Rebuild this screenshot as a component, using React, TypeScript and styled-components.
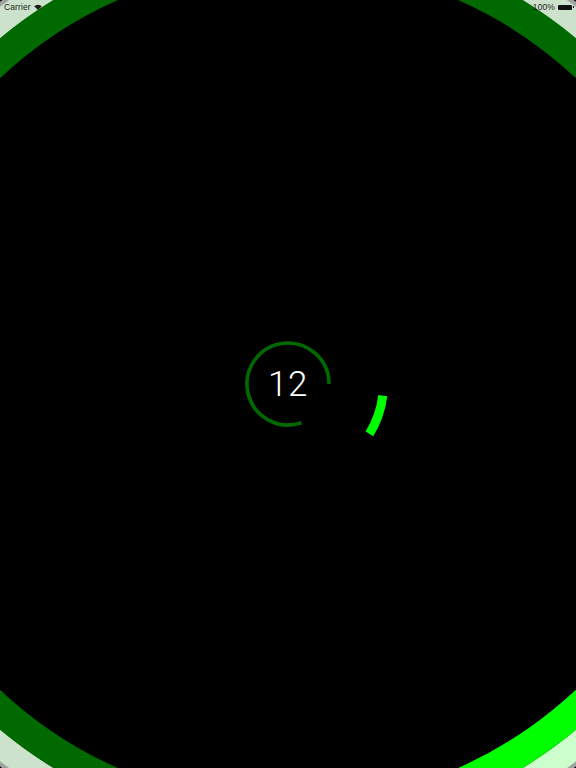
import React from "react";
import styled, { createGlobalStyle } from "styled-components";

const GlobalStyle = createGlobalStyle`
  html, body {
    margin: 0;
    padding: 0;
    background: #000;
    overflow: hidden;
  }
`;

const DARK = "#006a00";
const BRIGHT = "#00ff00";
const PALE_DARK = "#cce2cc";
const PALE_BRIGHT = "#ccffcc";

const CX = 288;
const CY = 384;

function arcPath(cx: number, cy: number, r: number, a0: number, a1: number) {
  const rad = (d: number) => (d * Math.PI) / 180;
  const x0 = cx + r * Math.cos(rad(a0));
  const y0 = cy + r * Math.sin(rad(a0));
  const x1 = cx + r * Math.cos(rad(a1));
  const y1 = cy + r * Math.sin(rad(a1));
  const large = a1 - a0 > 180 ? 1 : 0;
  return `M ${x0.toFixed(2)} ${y0.toFixed(2)} A ${r} ${r} 0 ${large} 1 ${x1.toFixed(2)} ${y1.toFixed(2)}`;
}

const Stage = styled.main`
  position: relative;
  width: 576px;
  height: 768px;
  background: #000;
  display: flex;
  align-items: center;
  justify-content: center;
  overflow: hidden;
`;

const RingArt = styled.svg`
  position: absolute;
  inset: 0;
  width: 576px;
  height: 768px;
  display: block;
`;

const StatusBar = styled.header`
  position: absolute;
  top: 0;
  left: 0;
  right: 0;
  height: 14px;
  padding: 0 2px 0 4px;
  display: flex;
  align-items: center;
  justify-content: space-between;
  font-family: "Liberation Sans", Arial, sans-serif;
  font-size: 8.5px;
  color: #1c1c1c;
  z-index: 2;
`;

const StatusGroup = styled.div`
  display: flex;
  align-items: center;
  gap: 3px;
`;

const StatusText = styled.span`
  line-height: 1;
  letter-spacing: 0.1px;
`;

const Battery = styled.div`
  position: relative;
  width: 14px;
  height: 5px;
  background: #111;
  border-radius: 1px;
  margin-right: 2px;
  &::after {
    content: "";
    position: absolute;
    right: -2px;
    top: 1.5px;
    width: 1.5px;
    height: 2px;
    background: #111;
  }
`;

const Gauge = styled.section`
  position: relative;
  width: 220px;
  height: 220px;
  display: flex;
  align-items: center;
  justify-content: center;
  z-index: 1;
`;

const GaugeArt = styled.svg`
  position: absolute;
  inset: 0;
  width: 220px;
  height: 220px;
  display: block;
`;

const Value = styled.span`
  position: relative;
  font-family: Roboto, "Open Sans", "Liberation Sans", sans-serif;
  font-weight: 300;
  font-size: 35px;
  line-height: 1;
  color: #fff;
  letter-spacing: 0.5px;
`;

const Wifi = () => (
  <svg width="8" height="6" viewBox="0 0 8 6">
    <path d="M4 6 L0.2 2.2 A5.4 5.4 0 0 1 7.8 2.2 Z" fill="#1c1c1c" />
  </svg>
);

export default function App() {
  const bigR = 435;
  const paleR = 462;
  const brightFrom = 10;
  const brightTo = 100;
  return (
    <>
      <GlobalStyle />
      <Stage>
        <RingArt viewBox="0 0 576 768">
          <circle cx={CX} cy={CY} r={476} fill="none" stroke="#a0a0a0" strokeWidth={5} />
          <circle cx={CX} cy={CY} r={paleR} fill="none" stroke={PALE_DARK} strokeWidth={25} />
          <path d={arcPath(CX, CY, paleR, brightFrom, brightTo)} fill="none" stroke={PALE_BRIGHT} strokeWidth={25} />
          <circle cx={CX} cy={CY} r={bigR} fill="none" stroke={DARK} strokeWidth={30} />
          <path d={arcPath(CX, CY, bigR, brightFrom, brightTo)} fill="none" stroke={BRIGHT} strokeWidth={30} />
        </RingArt>
        <StatusBar>
          <StatusGroup>
            <StatusText>Carrier</StatusText>
            <Wifi />
          </StatusGroup>
          <StatusGroup>
            <StatusText>100%</StatusText>
            <Battery />
          </StatusGroup>
        </StatusBar>
        <Gauge>
          <GaugeArt viewBox="-110 -110 220 220">
            <path d={arcPath(0, 0, 41, 71, 360)} fill="none" stroke={DARK} strokeWidth={3.6} />
            <path d={arcPath(0, 0, 95.5, 7, 31.5)} fill="none" stroke={BRIGHT} strokeWidth={9} />
          </GaugeArt>
          <Value>12</Value>
        </Gauge>
      </Stage>
    </>
  );
}
